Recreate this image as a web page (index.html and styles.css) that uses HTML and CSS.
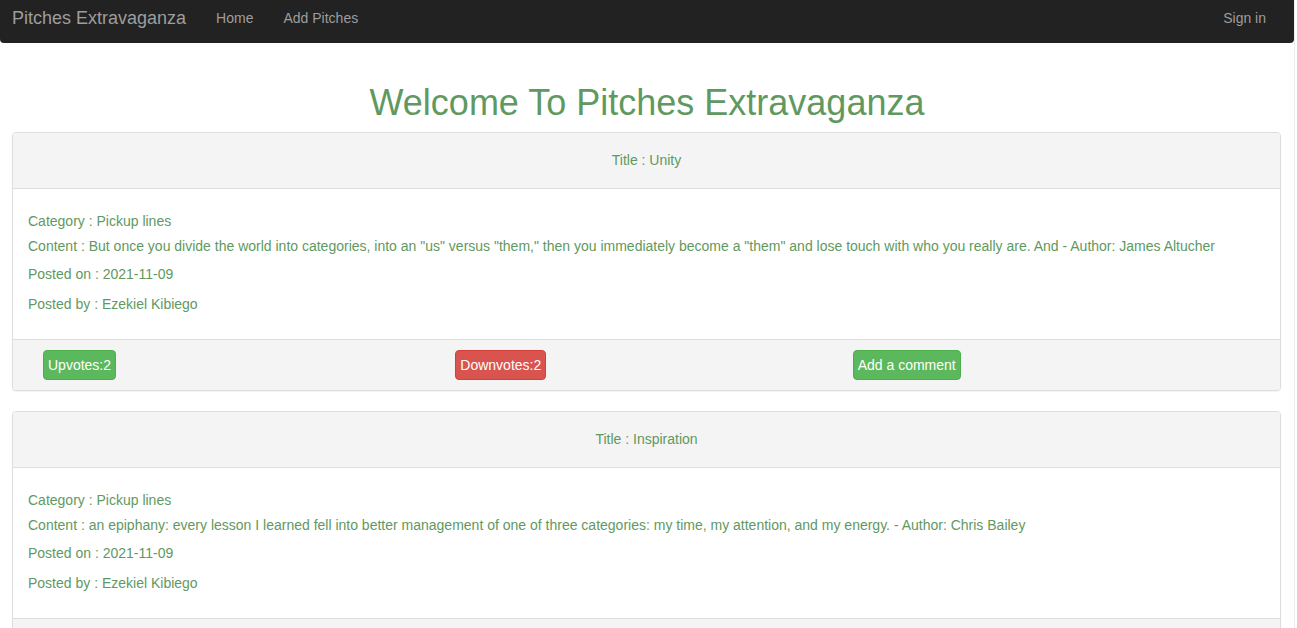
FILE: index.html
```html
<!DOCTYPE html>
<html lang="en">
<head>
<meta charset="utf-8">
<title>Pitches Extravaganza</title>
<link rel="stylesheet" href="styles.css">
</head>
<body>
<div class="page">
  <nav class="navbar">
    <a class="brand" href="#">Pitches Extravaganza</a>
    <ul class="nav">
      <li><a href="#">Home</a></li>
      <li><a href="#">Add Pitches</a></li>
    </ul>
    <ul class="nav nav-right">
      <li><a href="#">Sign in</a></li>
    </ul>
  </nav>
  <main class="container">
    <h1 class="title">Welcome To Pitches Extravaganza</h1>

    <section class="panel">
      <div class="panel-heading">Title : Unity</div>
      <div class="panel-body">
        <h5 class="line">Category : Pickup lines</h5>
        <h5 class="line">Content : But once you divide the world into categories, into an "us" versus "them," then you immediately become a "them" and lose touch with who you really are. And - Author: James Altucher</h5>
        <p class="meta">Posted on : 2021-11-09</p>
        <p class="meta">Posted by : Ezekiel Kibiego</p>
      </div>
      <div class="panel-footer">
        <div class="col"><button class="btn btn-success">Upvotes:2</button></div>
        <div class="col"><button class="btn btn-danger">Downvotes:2</button></div>
        <div class="col col-last"><button class="btn btn-success">Add a comment</button></div>
      </div>
    </section>

    <section class="panel">
      <div class="panel-heading">Title : Inspiration</div>
      <div class="panel-body">
        <h5 class="line">Category : Pickup lines</h5>
        <h5 class="line">Content : an epiphany: every lesson I learned fell into better management of one of three categories: my time, my attention, and my energy. - Author: Chris Bailey</h5>
        <p class="meta">Posted on : 2021-11-09</p>
        <p class="meta">Posted by : Ezekiel Kibiego</p>
      </div>
      <div class="panel-footer">
        <div class="col"><button class="btn btn-success">Upvotes:0</button></div>
        <div class="col"><button class="btn btn-danger">Downvotes:0</button></div>
        <div class="col col-last"><button class="btn btn-success">Add a comment</button></div>
      </div>
    </section>
  </main>
</div>
</body>
</html>
```

FILE: styles.css
```css
* { box-sizing: border-box; }

html, body {
  margin: 0;
  padding: 0;
  background: #fff;
}

body {
  font-family: "Liberation Sans", Arial, Helvetica, sans-serif;
  font-size: 14px;
  line-height: 20px;
  color: #5f995f;
}

.page {
  width: 1295px;
  min-height: 628px;
  border-right: 1px solid #ececec;
}

.navbar {
  display: flex;
  align-items: flex-start;
  height: 43px;
  background: #222;
  border-bottom-left-radius: 4px;
  border-bottom-right-radius: 4px;
  margin-bottom: 20px;
  padding: 8px 0 0 12px;
}

.navbar a {
  text-decoration: none;
  color: #9d9d9d;
}

.brand {
  font-size: 18px;
  line-height: 20px;
  margin-right: 15px;
}

.nav {
  display: flex;
  list-style: none;
  margin: 0;
  padding: 0;
}

.nav li a {
  display: block;
  padding: 0 15px;
  line-height: 20px;
  font-size: 14px;
}

.nav-right {
  margin-left: auto;
  margin-right: 13px;
}

.container {
  padding: 0 12px 0 12px;
  display: flow-root;
}

.title {
  margin: 20px 0 10px;
  font-size: 36px;
  line-height: 39px;
  font-weight: 500;
  text-align: center;
  color: #5f995f;
}

.panel {
  width: 1269px;
  border: 1px solid #ddd;
  border-radius: 4px;
  margin-bottom: 20px;
  box-shadow: 0 1px 1px rgba(0,0,0,.05);
  background: #fff;
}

.panel-heading {
  background: #f4f4f4;
  border-bottom: 1px solid #ddd;
  border-top-left-radius: 3px;
  border-top-right-radius: 3px;
  padding: 17px 15px 18px;
  text-align: center;
}

.panel-body {
  padding: 15px;
  display: flow-root;
}

.line {
  font-size: 14px;
  font-weight: 500;
  line-height: 15px;
  margin: 10px 0;
}

.meta {
  margin: 0 0 10px;
}

.panel-footer {
  display: grid;
  grid-template-columns: 1fr 1fr 1fr;
  background: #f4f4f4;
  border-top: 1px solid #ddd;
  border-bottom-left-radius: 3px;
  border-bottom-right-radius: 3px;
  padding: 10px 15px;
}

.col {
  padding: 0 15px;
}

.col-last {
  padding: 0;
}

.btn {
  display: block;
  font-family: "Liberation Sans", Arial, Helvetica, sans-serif;
  font-size: 14px;
  line-height: 20px;
  padding: 4px 4px;
  border: 1px solid transparent;
  border-radius: 4px;
  color: #fff;
  cursor: pointer;
}

.btn-success {
  background: #5cb85c;
  border-color: #4cae4c;
}

.btn-danger {
  background: #d9534f;
  border-color: #d43f3a;
}
```
